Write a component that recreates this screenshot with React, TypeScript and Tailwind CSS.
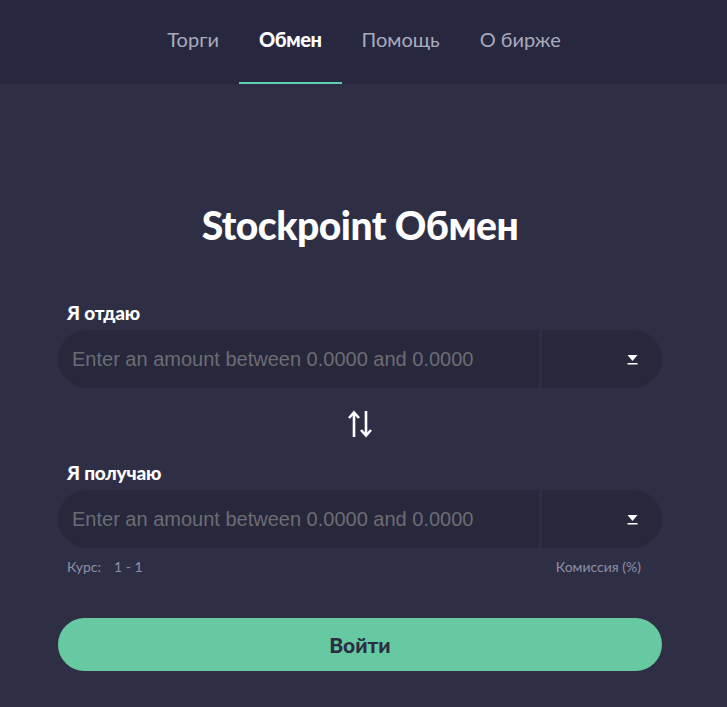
const navItems = ["Торги", "Обмен", "Помощь", "О бирже"];

const SelectArrow = () => (
  <svg width="11" height="11" viewBox="0 0 11 11" fill="white">
    <path d="M0.5 1 H10.5 L5.5 7 Z" />
    <rect x="0.5" y="9" width="10" height="1.5" />
  </svg>
);

const SwapIcon = () => (
  <svg width="26" height="28" viewBox="0 0 26 28" fill="none" stroke="white" strokeWidth="2.6">
    <path d="M7 27 V3" />
    <path d="M2 8 L7 2.5 L12 8" strokeLinejoin="miter" />
    <path d="M19 1 V25" />
    <path d="M14 20 L19 25.5 L24 20" strokeLinejoin="miter" />
  </svg>
);

const AmountField = ({ label }: { label: string }) => (
  <div>
    <div className="pl-[9px] text-[19px] font-black text-white leading-none mb-[8px] tracking-[-0.2px]">
      {label}
    </div>
    <div className="flex h-[58px] rounded-full overflow-hidden gap-[3px]">
      <div className="flex-1 bg-[#27283c] flex items-center pl-[14px]">
        <input
          className="w-full bg-transparent outline-none text-[20px] text-white placeholder:text-[#6c6c74] font-['Liberation_Sans',Arial,sans-serif]"
          placeholder="Enter an amount between 0.0000 and 0.0000"
        />
      </div>
      <div className="w-[120px] bg-[#27283c] flex items-center justify-end pr-[24px]">
        <SelectArrow />
      </div>
    </div>
  </div>
);

export default function App() {
  return (
    <div className="min-h-[707px] bg-[#2e2f45] font-['Lato',sans-serif]">
      {/* Header */}
      <div className="h-[84px] bg-[#272840] flex justify-center">
        <nav className="flex h-full pl-[1px]">
          {navItems.map((item) => {
            const active = item === "Обмен";
            return (
              <div
                key={item}
                className={
                  active
                    ? "px-[20px] h-full flex items-center pb-[4px] border-b-2 border-[#5fd0ad] text-white font-black text-[20px] tracking-[-0.4px]"
                    : "px-[20px] h-full flex items-center pb-[4px] border-b-2 border-transparent text-[#a9abbd] text-[20px]"
                }
              >
                {item}
              </div>
            );
          })}
        </nav>
      </div>

      {/* Exchange form */}
      <div className="flex justify-center pr-[7px]">
        <div className="w-[604px] pt-[122px] pb-[36px]">
          <h1 className="text-center text-white text-[39px] font-black tracking-[-0.5px] leading-none mb-[58px]">
            Stockpoint Обмен
          </h1>

          <AmountField label="Я отдаю" />

          <div className="flex justify-center mt-[22px] mb-[25px]">
            <SwapIcon />
          </div>

          <AmountField label="Я получаю" />

          <div className="flex justify-between px-[9px] mt-[8px] text-[14px] text-[#8e90a5]">
            <span>
              Курс:<span className="ml-[13px]">1 - 1</span>
            </span>
            <span className="pr-[12px]">Комиссия (%)</span>
          </div>

          <button className="mt-[41px] w-full h-[53px] rounded-full bg-[#66c9a2] text-[#2b2d42] text-[21px] font-black">
            Войти
          </button>
        </div>
      </div>
    </div>
  );
}
